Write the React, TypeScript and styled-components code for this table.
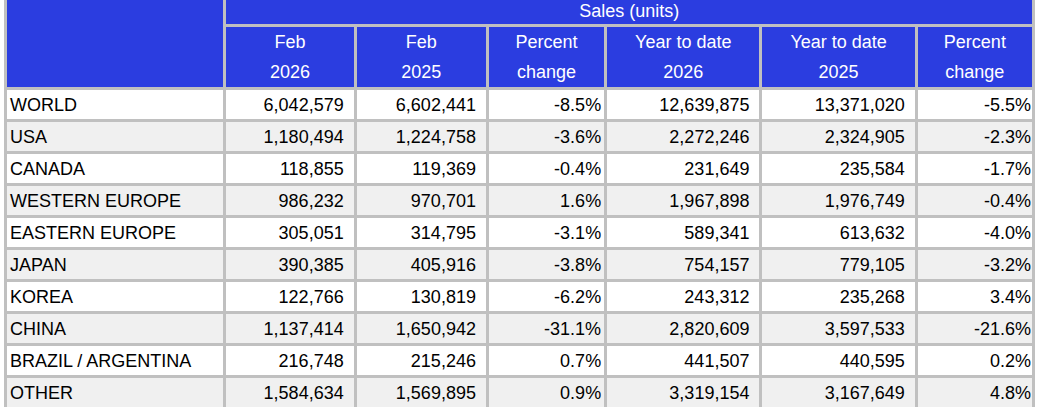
import React from "react";
import styled, { createGlobalStyle } from "styled-components";

const GlobalStyle = createGlobalStyle`
  html, body {
    margin: 0;
    padding: 0;
    background: #ffffff;
    overflow: hidden;
  }
  body {
    font-family: "Liberation Sans", Arial, sans-serif;
  }
`;

const Table = styled.table`
  width: 1031px;
  margin: -8px 0 0 4px;
  border-collapse: separate;
  border-spacing: 3px;
  background: #c0c0c0;
  font-family: "Liberation Sans", Arial, sans-serif;
  font-size: 18px;
  table-layout: fixed;
`;

const HeadCell = styled.th`
  background: #2b3de0;
  color: #ffffff;
  font-weight: normal;
  text-align: center;
  vertical-align: middle;
  line-height: 30px;
  padding: 0;
`;

const TopHeadCell = styled(HeadCell)`
  height: 29px;
  line-height: 26px;
  vertical-align: bottom;
`;

const Row = styled.tr<{ $alt: boolean }>`
  background: ${(p) => (p.$alt ? "#f0f0f0" : "#ffffff")};
`;

const Cell = styled.td<{ $align?: "left" | "right"; $pr?: number }>`
  height: 29px;
  padding: 1px ${(p) => p.$pr ?? 3}px 0 3px;
  box-sizing: border-box;
  line-height: 28px;
  color: #000000;
  text-align: ${(p) => p.$align ?? "right"};
  white-space: nowrap;
  overflow: hidden;
`;

type Line = [string, string, string, string, string, string, string];

const rows: Line[] = [
  ["WORLD", "6,042,579", "6,602,441", "-8.5%", "12,639,875", "13,371,020", "-5.5%"],
  ["USA", "1,180,494", "1,224,758", "-3.6%", "2,272,246", "2,324,905", "-2.3%"],
  ["CANADA", "118,855", "119,369", "-0.4%", "231,649", "235,584", "-1.7%"],
  ["WESTERN EUROPE", "986,232", "970,701", "1.6%", "1,967,898", "1,976,749", "-0.4%"],
  ["EASTERN EUROPE", "305,051", "314,795", "-3.1%", "589,341", "613,632", "-4.0%"],
  ["JAPAN", "390,385", "405,916", "-3.8%", "754,157", "779,105", "-3.2%"],
  ["KOREA", "122,766", "130,819", "-6.2%", "243,312", "235,268", "3.4%"],
  ["CHINA", "1,137,414", "1,650,942", "-31.1%", "2,820,609", "3,597,533", "-21.6%"],
  ["BRAZIL / ARGENTINA", "216,748", "215,246", "0.7%", "441,507", "440,595", "0.2%"],
  ["OTHER", "1,584,634", "1,569,895", "0.9%", "3,319,154", "3,167,649", "4.8%"],
];

const columns = [
  { w: 216, top: "", bottom: "" },
  { w: 127, top: "Feb", bottom: "2026" },
  { w: 129, top: "Feb", bottom: "2025" },
  { w: 115, top: "Percent", bottom: "change" },
  { w: 152, top: "Year to date", bottom: "2026" },
  { w: 152, top: "Year to date", bottom: "2025" },
  { w: 114, top: "Percent", bottom: "change" },
];

// right padding per column: counts sit a bit further in than percents
const padRight = [3, 10, 10, 3, 10, 10, 1];

export default function App() {
  return (
    <>
      <GlobalStyle />
      <Table>
        <colgroup>
          {columns.map((c, i) => (
            <col key={i} style={{ width: c.w }} />
          ))}
        </colgroup>
        <thead>
          <tr>
            <TopHeadCell rowSpan={2} />
            <TopHeadCell colSpan={6}>Sales (units)</TopHeadCell>
          </tr>
          <tr>
            {columns.slice(1).map((c, i) => (
              <HeadCell key={i}>
                {c.top}
                <br />
                {c.bottom}
              </HeadCell>
            ))}
          </tr>
        </thead>
        <tbody>
          {rows.map((r, i) => (
            <Row key={r[0]} $alt={i % 2 === 1}>
              {r.map((v, j) => (
                <Cell key={j} $align={j === 0 ? "left" : "right"} $pr={padRight[j]}>
                  {v}
                </Cell>
              ))}
            </Row>
          ))}
        </tbody>
      </Table>
    </>
  );
}
